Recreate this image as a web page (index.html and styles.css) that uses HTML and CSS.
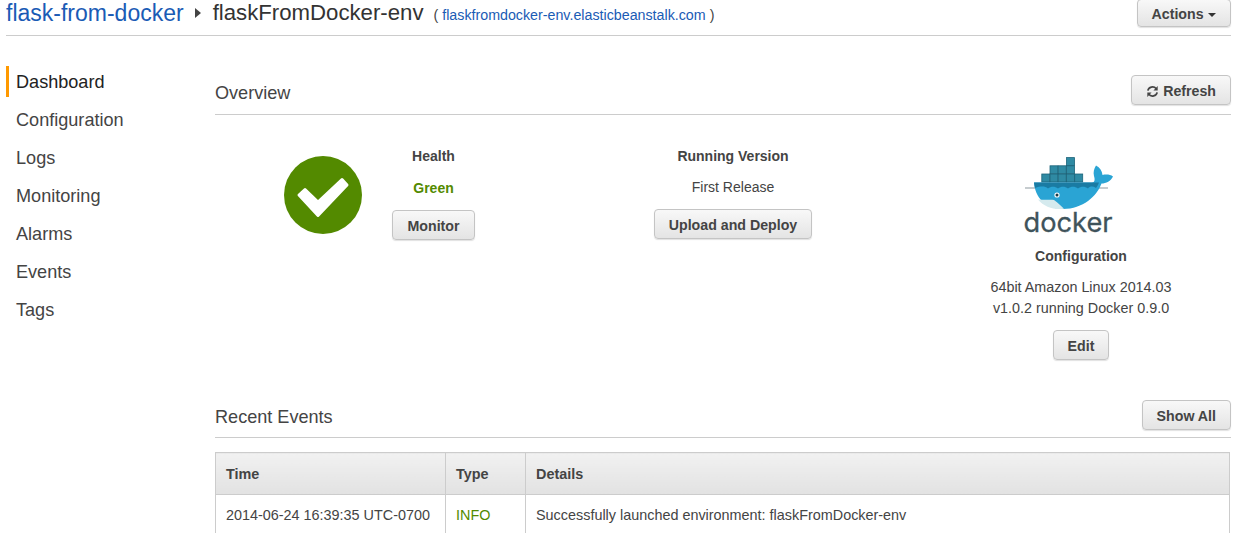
FILE: index.html
```html
<!DOCTYPE html>
<html lang="en">
<head>
    <meta charset="UTF-8">
    <title>flaskFromDocker-env</title>
    <link rel="stylesheet" href="styles.css">
</head>
<body>
<header class="top-bar">
    <div class="crumbs">
        <a class="crumb-link" href="#">flask-from-docker</a>
        <span class="crumb-arrow"></span>
        <span class="crumb-current">flaskFromDocker-env</span>
        <span class="crumb-url">( <a href="#">flaskfromdocker-env.elasticbeanstalk.com</a> )</span>
    </div>
    <button class="btn btn-actions">Actions <span class="caret"></span></button>
</header>

<div class="page">
    <nav class="side-nav">
        <a class="nav-item active" href="#">Dashboard</a>
        <a class="nav-item" href="#">Configuration</a>
        <a class="nav-item" href="#">Logs</a>
        <a class="nav-item" href="#">Monitoring</a>
        <a class="nav-item" href="#">Alarms</a>
        <a class="nav-item" href="#">Events</a>
        <a class="nav-item" href="#">Tags</a>
    </nav>

    <main class="content">
        <div class="section-head">
            <h2>Overview</h2>
            <button class="btn">
                <svg class="refresh-icon" viewBox="0 0 14 14" width="13" height="13">
                    <path d="M2 6 A5 4.6 0 0 1 11 4" fill="none" stroke="#444" stroke-width="1.8"/>
                    <path d="M12.6 1.2 V6 H8 Z" fill="#444"/>
                    <path d="M12 8 A5 4.6 0 0 1 3 10" fill="none" stroke="#444" stroke-width="1.8"/>
                    <path d="M1.4 12.8 V8 H6 Z" fill="#444"/>
                </svg>
                Refresh
            </button>
        </div>

        <div class="overview">
            <section class="ov-health">
                <svg class="health-icon" viewBox="0 0 78 78" width="78" height="78">
                    <circle cx="39" cy="39" r="39" fill="#538a00"/>
                    <polygon points="15,39 21,33.500 34,46 58,23.500 63,29 34,59.500" fill="#fff" stroke="#fff" stroke-width="3" stroke-linejoin="round"/>
                </svg>
                <div class="ov-col health-col">
                    <h3>Health</h3>
                    <p class="status-green">Green</p>
                    <button class="btn">Monitor</button>
                </div>
            </section>

            <section class="ov-col ov-version">
                <h3>Running Version</h3>
                <p>First Release</p>
                <button class="btn">Upload and Deploy</button>
            </section>

            <section class="ov-col ov-config">
                <svg class="docker-logo" viewBox="0 0 95 86" width="95" height="86">
                    <path d="M2 33 H85" fill="none" stroke="#5b6f76" stroke-width=".7"/>
                    <g fill="#2f8aa3" stroke="#1c6379" stroke-width=".8">
                        <rect x="43.500" y="2.600" width="8" height="8"/>
                        <rect x="27" y="10.800" width="8" height="8"/>
                        <rect x="35.200" y="10.800" width="8" height="8"/>
                        <rect x="43.500" y="10.800" width="8" height="8"/>
                        <rect x="18.800" y="19" width="8" height="8"/>
                        <rect x="27" y="19" width="8" height="8"/>
                        <rect x="35.200" y="19" width="8" height="8"/>
                        <rect x="43.500" y="19" width="8" height="8"/>
                        <rect x="51.700" y="19" width="8" height="8"/>
                    </g>
                    <path d="M11 27.500 H69 C72 27.500 72 24 71 21 C70 17 71 14 73 10.500 C77 12.500 79 16 79.500 20 C83 19 87.500 19.500 90 21.500 C88 26 83 28.500 78.500 28.500 C74 41 60 54 40 54 C22 54 12 42 11 27.500 Z" fill="#2aa4d4"/>
                    <path d="M11 27.500 H76 C75 30 74 32 73 33 C70 31 67 31 65 33.500 C62 31 58 31 55 33.500 C52 31 48 31 45 33.500 C42 31 38 31 35 33.500 C32 31 28 31 25 33.500 C22 31 18 31 12 33 Z" fill="#1a7ba3"/>
                    <path d="M15 44.500 C21 45 27 44.500 31 45 C35 48 39 51.500 41 53.800 C31 55 21 52 15 44.500 Z" fill="#d5eaee"/>
                    <circle cx="34" cy="40" r="2.600" fill="#fff"/>
                    <circle cx="34" cy="40" r="1.500" fill="#1d3a45"/>
                    <text class="docker-word" x="45" y="77" text-anchor="middle" textLength="89" lengthAdjust="spacingAndGlyphs">docker</text>
                </svg>
                <h3 class="config-title">Configuration</h3>
                <p class="config-text">64bit Amazon Linux 2014.03<br>v1.0.2 running Docker 0.9.0</p>
                <button class="btn">Edit</button>
            </section>
        </div>

        <div class="section-head events-head">
            <h2>Recent Events</h2>
            <button class="btn">Show All</button>
        </div>

        <table class="events">
            <thead>
            <tr>
                <th class="col-time">Time</th>
                <th class="col-type">Type</th>
                <th>Details</th>
            </tr>
            </thead>
            <tbody>
            <tr>
                <td>2014-06-24 16:39:35 UTC-0700</td>
                <td class="type-info">INFO</td>
                <td>Successfully launched environment: flaskFromDocker-env</td>
            </tr>
            </tbody>
        </table>
    </main>
</div>
</body>
</html>
```

FILE: styles.css
```css
html, body {
    height: 533px;
    overflow: hidden;
}

body {
    margin: 0;
    background: #fff;
    color: #444;
    font-family: "Liberation Sans", Arial, sans-serif;
    font-size: 14px;
}

a {
    color: #1a5bb5;
    text-decoration: none;
}

h2, h3, p {
    margin: 0;
}

.top-bar {
    display: flex;
    justify-content: space-between;
    align-items: flex-end;
    height: 35px;
    margin: 0 16px 0 6px;
    border-bottom: 1px solid #ccc;
}

.crumbs {
    display: flex;
    align-items: center;
    height: 26px;
    margin-bottom: 9px;
}

.crumb-link {
    font-size: 23px;
}

.crumb-arrow {
    width: 0;
    height: 0;
    margin: 0 12px 0 11px;
    border-left: 6px solid #444;
    border-top: 5px solid transparent;
    border-bottom: 5px solid transparent;
}

.crumb-current {
    font-size: 22.200px;
    color: #333;
}

.crumb-url {
    margin: 3px 0 0 10px;
    font-size: 14.250px;
}

.btn {
    height: 30px;
    padding: 2px 14px 0;
    border: 1px solid #c4c4c4;
    border-radius: 4px;
    background: linear-gradient(#f8f8f8, #e4e4e4);
    box-shadow: 0 1px 1px rgba(0, 0, 0, 0.12);
    color: #444;
    font-family: inherit;
    font-size: 14.200px;
    font-weight: bold;
    white-space: nowrap;
}

.btn-actions {
    height: 28px;
    margin-bottom: 8px;
    width: 94px;
    padding: 1px 0 0;
}

.caret {
    display: inline-block;
    margin-left: 1px;
    vertical-align: 2px;
    border-top: 4px solid #333;
    border-left: 4px solid transparent;
    border-right: 4px solid transparent;
}

.refresh-icon {
    vertical-align: -2px;
}

.page {
    display: flex;
    margin: 0 16px 0 6px;
}

.side-nav {
    display: flex;
    flex-direction: column;
    width: 209px;
    padding-top: 27px;
}

.nav-item {
    height: 38px;
    line-height: 38px;
    padding-left: 10px;
    color: #444;
    font-size: 18.100px;
    position: relative;
}

.nav-item.active {
    color: #222;
}

.nav-item.active::before {
    content: "";
    position: absolute;
    left: 0;
    top: 3px;
    bottom: 4px;
    width: 3px;
    background: #f90;
}

.content {
    flex: 1;
    padding-top: 39px;
}

.section-head {
    display: flex;
    justify-content: space-between;
    align-items: flex-start;
    height: 39px;
    border-bottom: 1px solid #ccc;
}

.events-head {
    height: 37px;
}

.section-head h2 {
    font-size: 18.100px;
    line-height: 36px;
    font-weight: normal;
    color: #444;
}

.events-head h2 {
    line-height: 34px;
}

.overview {
    display: flex;
    height: 285px;
}

.ov-health {
    display: flex;
    width: 368px;
    padding: 41px 0 0 69px;
    box-sizing: border-box;
    gap: 30px;
}

.health-icon {
    flex: none;
}

.ov-col {
    display: flex;
    flex-direction: column;
    align-items: center;
}

.ov-col h3 {
    font-size: 14px;
    line-height: 16px;
    color: #444;
}

.health-col {
    width: 83px;
    margin-top: -8px;
}

.status-green {
    margin: 16px 0 14px;
    line-height: 16px;
    font-weight: bold;
    color: #538a00;
}

.ov-version {
    width: 300px;
    padding-top: 33px;
}

.ov-version p {
    margin: 15px 0 14px;
    line-height: 16px;
}

.ov-config {
    flex: 1;
    margin-left: 48px;
    padding-top: 40px;
}

.docker-logo {
    display: block;
    margin-right: 22px;
}

.docker-word {
    font-family: Inter, sans-serif;
    font-size: 27px;
    font-weight: 400;
    fill: #3f535b;
    stroke: #3f535b;
    stroke-width: .3;
}

.config-title {
    margin-top: 7px;
}

.config-text {
    margin: 13px 0 11px;
    font-size: 14.350px;
    line-height: 21px;
    text-align: center;
}

.events {
    width: 1015px;
    margin-top: 14px;
    border-collapse: collapse;
    table-layout: fixed;
    border: 1px solid #ccc;
}

.events th,
.events td {
    padding: 0 10px;
    border: 1px solid #ccc;
    text-align: left;
    white-space: nowrap;
}

.events th {
    height: 41px;
    background: linear-gradient(#f1f1f1, #e2e2e2);
    font-weight: bold;
    font-size: 14.400px;
}

.events td {
    height: 41px;
    padding-top: 10px;
    line-height: 20px;
    vertical-align: top;
    font-size: 14.400px;
}

.col-time {
    width: 209px;
}

.col-type {
    width: 59px;
}

.type-info {
    color: #538a00;
}
```
